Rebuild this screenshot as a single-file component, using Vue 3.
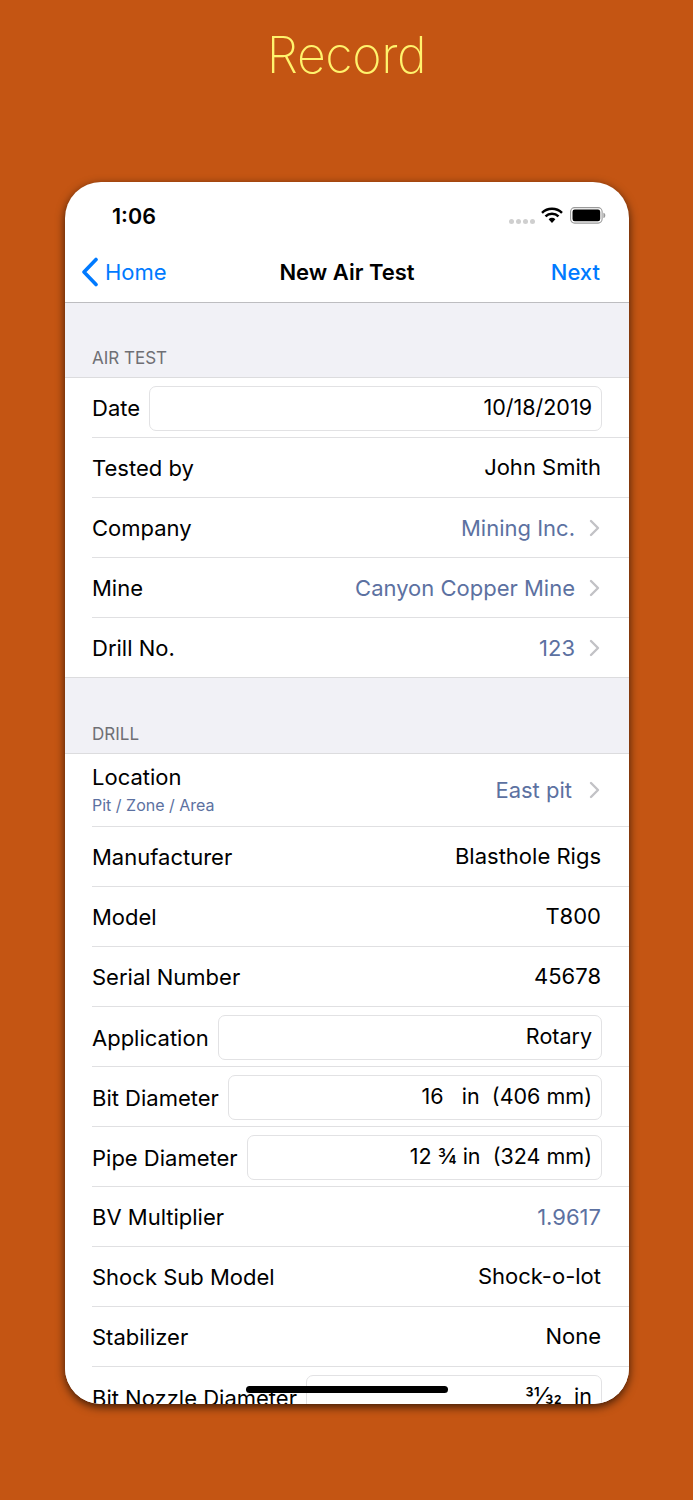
<script setup>
const sections = [
  {
    title: 'AIR TEST',
    rows: [
      { label: 'Date', value: '10/18/2019', kind: 'input' },
      { label: 'Tested by', value: 'John Smith' },
      { label: 'Company', value: 'Mining Inc.', kind: 'link' },
      { label: 'Mine', value: 'Canyon Copper Mine', kind: 'link' },
      { label: 'Drill No.', value: '123', kind: 'link' },
    ],
  },
  {
    title: 'DRILL',
    rows: [
      { label: 'Location', sub: 'Pit / Zone / Area', value: 'East pit', kind: 'link' },
      { label: 'Manufacturer', value: 'Blasthole Rigs' },
      { label: 'Model', value: 'T800' },
      { label: 'Serial Number', value: '45678' },
      { label: 'Application', value: 'Rotary', kind: 'input' },
      { label: 'Bit Diameter', value: '16   in  (406 mm)', kind: 'input' },
      { label: 'Pipe Diameter', value: '12 ¾ in  (324 mm)', kind: 'input' },
      { label: 'BV Multiplier', value: '1.9617', kind: 'muted' },
      { label: 'Shock Sub Model', value: 'Shock-o-lot' },
      { label: 'Stabilizer', value: 'None' },
      { label: 'Bit Nozzle Diameter', value: '  in', frac: '31/32', kind: 'input' },
    ],
  },
]
</script>

<template>
  <div class="page">
    <h1 class="title">Record</h1>
    <div class="phone">
      <div class="status">
        <span class="time">1:06</span>
        <div class="status-icons">
          <span class="dots"><i></i><i></i><i></i><i></i></span>
          <svg class="wifi" width="22" height="17" viewBox="0 0 22 17">
            <path d="M1 5.8a14.4 14.4 0 0 1 20 0" fill="none" stroke="#000" stroke-width="2.5"/>
            <path d="M4.5 9.3a9.4 9.4 0 0 1 13 0" fill="none" stroke="#000" stroke-width="2.5"/>
            <path d="M7.6 12.2a4.9 4.9 0 0 1 6.8 0L11 16z" fill="#000"/>
          </svg>
          <svg class="battery" width="36" height="17" viewBox="0 0 36 17">
            <rect x="0.6" y="0.6" width="31.5" height="15.5" rx="4" fill="none" stroke="#9a9a9a" stroke-width="1.1"/>
            <rect x="2.5" y="2.5" width="27.7" height="11.7" rx="2.2" fill="#000"/>
            <path d="M33.4 5.8c1.2.3 1.9 1.4 1.9 2.6s-.7 2.3-1.9 2.6z" fill="#9a9a9a"/>
          </svg>
        </div>
      </div>
      <nav class="nav">
        <div class="back">
          <svg width="18" height="30" viewBox="0 0 18 30">
            <path d="M15 2.5 3 15l12 12.5" fill="none" stroke="#007aff" stroke-width="3.6" stroke-linecap="round" stroke-linejoin="round"/>
          </svg>
          <span>Home</span>
        </div>
        <div class="nav-title">New Air Test</div>
        <div class="next">Next</div>
      </nav>
      <section v-for="s in sections" :key="s.title">
        <div class="section-head">{{ s.title }}</div>
        <div class="rows">
          <div v-for="r in s.rows" :key="r.label" class="row" :class="{ tall: r.sub, boxed: r.kind === 'input' }">
            <div class="label-wrap">
              <div class="label">{{ r.label }}</div>
              <div v-if="r.sub" class="sub">{{ r.sub }}</div>
            </div>
            <div v-if="r.kind === 'input'" class="input"><span v-if="r.frac" class="frac">{{ r.frac }}</span>{{ r.value }}</div>
            <div v-else class="value" :class="{ blue: r.kind === 'link' || r.kind === 'muted', plain: !r.kind }">{{ r.value }}</div>
            <svg v-if="r.kind === 'link'" class="chev" width="11" height="18" viewBox="0 0 11 18">
              <path d="M2 2l7 7-7 7" fill="none" stroke="#c2c2c6" stroke-width="2.4" stroke-linecap="round" stroke-linejoin="round"/>
            </svg>
          </div>
        </div>
      </section>
      <div class="home-bar"></div>
    </div>
  </div>
</template>

<style scoped>
.page {
  width: 693px;
  height: 1500px;
  background: #c45513;
  font-family: Inter, "Liberation Sans", sans-serif;
  overflow: hidden;
  position: relative;
}
.title {
  margin: 0;
  height: 182px;
  padding-top: 24px;
  box-sizing: border-box;
  text-align: center;
  color: #fff36d;
  font-size: 50px;
  line-height: 62px;
  font-weight: 250;
  letter-spacing: -0.4px;
}
.phone {
  position: relative;
  width: 564px;
  height: 1222px;
  margin-left: 65px;
  background: #fff;
  border-radius: 36px;
  overflow: hidden;
  box-shadow: 0 3px 10px rgba(0, 0, 0, 0.7);
}
.status {
  height: 63px;
  display: flex;
  justify-content: space-between;
  align-items: center;
  padding: 4px 23px 0 47px;
  box-sizing: border-box;
}
.time {
  font-size: 21.5px;
  font-weight: 600;
  color: #000;
}
.status-icons {
  display: flex;
  align-items: center;
  gap: 7px;
}
.dots {
  display: flex;
  gap: 2px;
  margin-top: 11px;
  margin-right: -1px;
}
.dots i {
  width: 5px;
  height: 5px;
  border-radius: 50%;
  background: #cfcfcf;
}
.nav {
  height: 58px;
  display: grid;
  grid-template-columns: 1fr auto 1fr;
  align-items: center;
  padding: 0 29px 4px;
  box-sizing: border-box;
  border-bottom: 1px solid #bdbdc0;
  font-size: 22px;
}
.back {
  display: flex;
  align-items: center;
  gap: 6px;
  margin-left: -13px;
  color: #007aff;
}
.nav-title {
  font-weight: 600;
  color: #000;
}
.next {
  text-align: right;
  color: #007aff;
  font-weight: 550;
}
.section-head {
  height: 75px;
  box-sizing: border-box;
  padding: 45px 27px 0;
  background: #f1f1f6;
  border-bottom: 1px solid #dcdcde;
  color: #6f6f74;
  font-size: 17px;
  line-height: 20px;
}
section + section .section-head {
  height: 76px;
  padding-top: 46px;
}
.rows {
  background: #fff;
}
.row {
  height: 60px;
  margin-left: 27px;
  padding-right: 27px;
  box-sizing: border-box;
  display: flex;
  align-items: center;
  border-bottom: 1px solid #e0e0e2;
  color: #000;
  font-size: 22px;
}
.row:last-child {
  margin-left: 0;
  padding-left: 27px;
  border-color: #dcdcde;
}
.row.tall {
  height: 73px;
}
.label-wrap {
  flex: none;
  margin-right: 9px;
}
.row.tall .label-wrap {
  margin-top: -2px;
}
section + section .row.boxed .label {
  margin-top: 2px;
}
.sub {
  font-size: 16px;
  line-height: 20px;
  margin-top: 5px;
  color: #5c71a1;
}
.label {
  line-height: 26px;
}
.value {
  flex: 1;
  text-align: right;
  white-space: pre;
  padding-right: 1px;
}
.value.plain {
  margin-top: -2px;
}
.value.blue {
  color: #5c71a1;
}
.row.tall .value {
  padding-right: 4px;
}
.chev {
  margin-left: 13px;
  margin-right: 2px;
  flex: none;
}
.input {
  flex: 1;
  height: 45px;
  margin-top: 1px;
  box-sizing: border-box;
  border: 1px solid #e2e2e4;
  border-radius: 7px;
  padding: 0 9px;
  font-size: 21.5px;
  line-height: 41px;
  text-align: right;
  white-space: pre;
}
.frac {
  font-size: 23px;
  font-feature-settings: "frac";
}
.home-bar {
  position: absolute;
  left: 181px;
  top: 1204px;
  width: 202px;
  height: 7px;
  border-radius: 4px;
  background: #000;
}
</style>
